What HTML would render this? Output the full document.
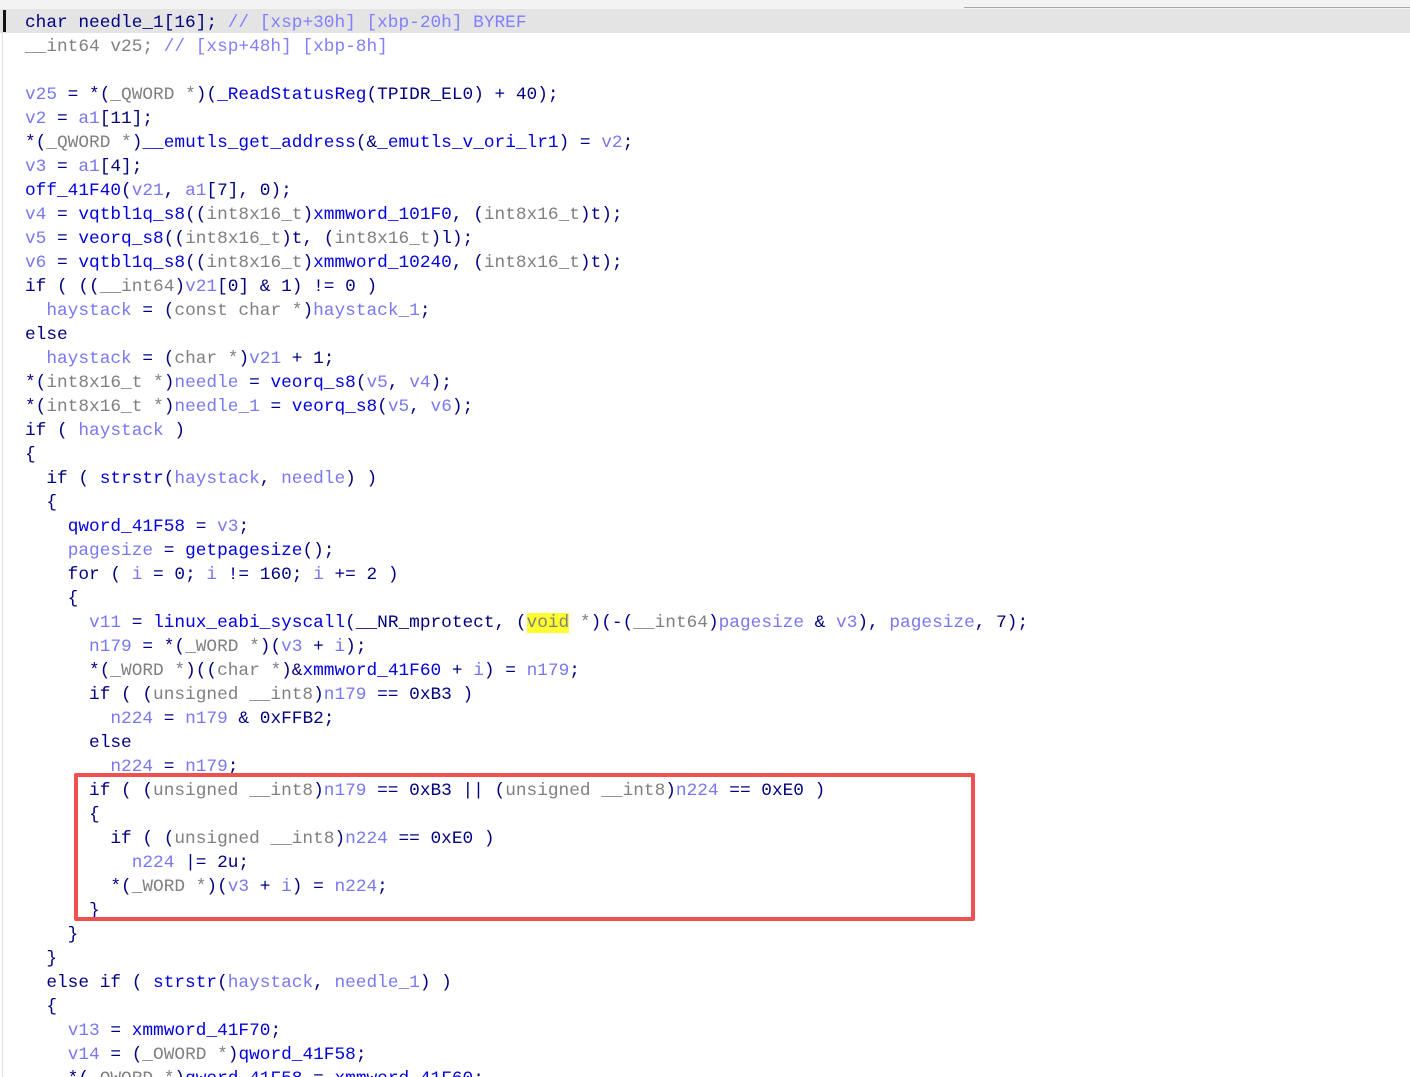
<!DOCTYPE html>
<html><head><meta charset="utf-8"><style>
html,body{margin:0;padding:0;background:#fff;width:1410px;height:1077px;overflow:hidden;position:relative}
#top{position:absolute;left:0;top:0;width:1410px;height:9px;background:#f3f3f3}
#top2{position:absolute;left:964px;top:7px;width:446px;height:1px;background:#a8a8a8}
#hl{position:absolute;left:0;top:9px;width:1410px;height:24px;background:#e4e4e4}
#cur{position:absolute;left:3px;top:10px;width:3px;height:22px;background:#111}
#lb{position:absolute;left:2px;top:33px;width:1px;height:1044px;background:#e0e0e0}
pre{position:absolute;left:25px;top:11px;margin:0;font-family:"Liberation Mono",monospace;font-size:17.8px;line-height:24px;color:#000080;white-space:pre}
.v{color:#7878f0}.f{color:#0000e0}.t{color:#808080}.c{color:#8080ff}
.y{background:#ffff30;color:#808080}
#box{position:absolute;left:74px;top:773px;width:893px;height:140px;border:4px solid #f05050;border-radius:2px}
</style></head><body>
<div id="top"></div><div id="top2"></div><div id="hl"></div><div id="cur"></div><div id="lb"></div>
<pre>char needle_1[16]; <span class="c">// [xsp+30h] [xbp-20h] BYREF</span>
<span class="t">__int64 v25;</span> <span class="c">// [xsp+48h] [xbp-8h]</span>

<span class="v">v25</span> = *(<span class="t">_QWORD *</span>)(<span class="f">_ReadStatusReg</span>(TPIDR_EL0) + 40);
<span class="v">v2</span> = <span class="v">a1</span>[11];
*(<span class="t">_QWORD *</span>)<span class="f">__emutls_get_address</span>(&amp;<span class="f">_emutls_v_ori_lr1</span>) = <span class="v">v2</span>;
<span class="v">v3</span> = <span class="v">a1</span>[4];
<span class="f">off_41F40</span>(<span class="v">v21</span>, <span class="v">a1</span>[7], 0);
<span class="v">v4</span> = <span class="f">vqtbl1q_s8</span>((<span class="t">int8x16_t</span>)<span class="f">xmmword_101F0</span>, (<span class="t">int8x16_t</span>)t);
<span class="v">v5</span> = <span class="f">veorq_s8</span>((<span class="t">int8x16_t</span>)t, (<span class="t">int8x16_t</span>)l);
<span class="v">v6</span> = <span class="f">vqtbl1q_s8</span>((<span class="t">int8x16_t</span>)<span class="f">xmmword_10240</span>, (<span class="t">int8x16_t</span>)t);
if ( ((<span class="t">__int64</span>)<span class="v">v21</span>[0] &amp; 1) != 0 )
  <span class="v">haystack</span> = (<span class="t">const char *</span>)<span class="v">haystack_1</span>;
else
  <span class="v">haystack</span> = (<span class="t">char *</span>)<span class="v">v21</span> + 1;
*(<span class="t">int8x16_t *</span>)<span class="v">needle</span> = <span class="f">veorq_s8</span>(<span class="v">v5</span>, <span class="v">v4</span>);
*(<span class="t">int8x16_t *</span>)<span class="v">needle_1</span> = <span class="f">veorq_s8</span>(<span class="v">v5</span>, <span class="v">v6</span>);
if ( <span class="v">haystack</span> )
{
  if ( <span class="f">strstr</span>(<span class="v">haystack</span>, <span class="v">needle</span>) )
  {
    <span class="f">qword_41F58</span> = <span class="v">v3</span>;
    <span class="v">pagesize</span> = <span class="f">getpagesize</span>();
    for ( <span class="v">i</span> = 0; <span class="v">i</span> != 160; <span class="v">i</span> += 2 )
    {
      <span class="v">v11</span> = <span class="f">linux_eabi_syscall</span>(__NR_mprotect, (<span class="y">void</span><span class="t"> *</span>)(-(<span class="t">__int64</span>)<span class="v">pagesize</span> &amp; <span class="v">v3</span>), <span class="v">pagesize</span>, 7);
      <span class="v">n179</span> = *(<span class="t">_WORD *</span>)(<span class="v">v3</span> + <span class="v">i</span>);
      *(<span class="t">_WORD *</span>)((<span class="t">char *</span>)&amp;<span class="f">xmmword_41F60</span> + <span class="v">i</span>) = <span class="v">n179</span>;
      if ( (<span class="t">unsigned __int8</span>)<span class="v">n179</span> == 0xB3 )
        <span class="v">n224</span> = <span class="v">n179</span> &amp; 0xFFB2;
      else
        <span class="v">n224</span> = <span class="v">n179</span>;
      if ( (<span class="t">unsigned __int8</span>)<span class="v">n179</span> == 0xB3 || (<span class="t">unsigned __int8</span>)<span class="v">n224</span> == 0xE0 )
      {
        if ( (<span class="t">unsigned __int8</span>)<span class="v">n224</span> == 0xE0 )
          <span class="v">n224</span> |= 2u;
        *(<span class="t">_WORD *</span>)(<span class="v">v3</span> + <span class="v">i</span>) = <span class="v">n224</span>;
      }
    }
  }
  else if ( <span class="f">strstr</span>(<span class="v">haystack</span>, <span class="v">needle_1</span>) )
  {
    <span class="v">v13</span> = <span class="f">xmmword_41F70</span>;
    <span class="v">v14</span> = (<span class="t">_OWORD *</span>)<span class="f">qword_41F58</span>;
    *(<span class="t">_OWORD *</span>)<span class="f">qword_41F58</span> = <span class="f">xmmword_41F60</span>;
</pre>
<div id="box"></div>
</body></html>
